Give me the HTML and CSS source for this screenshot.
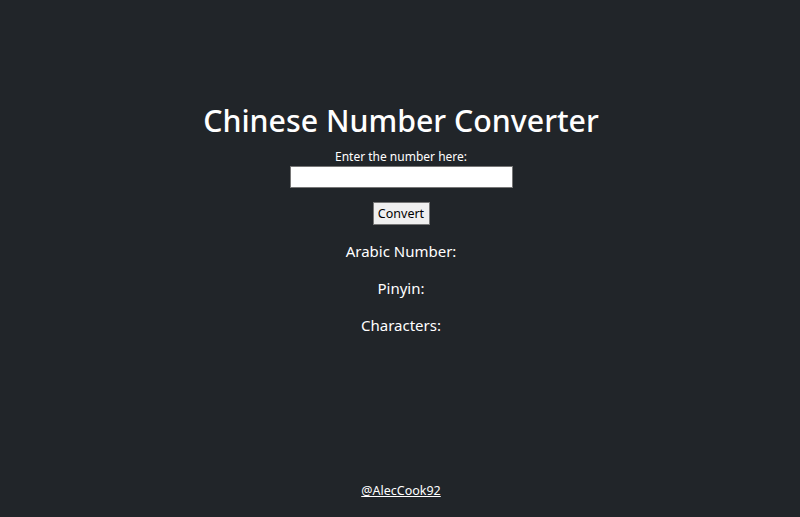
FILE: index.html
```html
<!DOCTYPE html>
<html lang="en">
<head>
<meta charset="utf-8">
<title>Chinese Number Converter</title>
<link rel="stylesheet" href="styles.css">
</head>
<body>
<div class="page">
  <main class="main">
    <h1 class="title">Chinese Number Converter</h1>
    <form class="form">
      <label class="label" for="num">Enter the number here:</label>
      <input class="input" id="num" type="text">
      <button class="btn" type="button">Convert</button>
    </form>
    <p class="result">Arabic Number:</p>
    <p class="result">Pinyin:</p>
    <p class="result">Characters:</p>
  </main>
  <footer class="footer"><a class="link" href="#">@AlecCook92</a></footer>
</div>
</body>
</html>
```

FILE: styles.css
```css
html, body {
  margin: 0;
  padding: 0;
  height: 100%;
}
body {
  background: #212529;
  color: #ffffff;
  font-family: "Noto Sans", "Open Sans", sans-serif;
  font-size: 15px;
  text-align: center;
}
.page {
  min-height: 100vh;
  display: flex;
  flex-direction: column;
  align-items: center;
}
.main {
  display: flex;
  flex-direction: column;
  align-items: center;
  padding-top: 99px;
  padding-left: 2px;
}
.title {
  margin: 0;
  font-size: 30.3px;
  font-weight: 500;
  line-height: 44px;
}
.form {
  display: flex;
  flex-direction: column;
  align-items: center;
}
.label {
  font-size: 12px;
  line-height: 16px;
  margin-top: 6px;
  margin-bottom: 1px;
}
.input {
  box-sizing: border-box;
  width: 223px;
  height: 22px;
  margin: 0;
  border: 1px solid #767676;
  background: #ffffff;
  padding: 1px 2px;
}
.btn {
  box-sizing: border-box;
  margin-top: 14px;
  height: 23px;
  width: 57px;
  padding: 0;
  font-family: inherit;
  font-size: 12.5px;
  background: #efefef;
  border: 1px solid #767676;
  color: #000;
}
.result {
  margin: 0;
  margin-top: 15px;
  line-height: 22px;
}
.result + .result {
  margin-top: 15px;
}
.footer {
  margin-top: auto;
  padding-bottom: 18px;
  padding-left: 2px;
}
.link {
  color: #ffffff;
  font-size: 12.5px;
}
```
